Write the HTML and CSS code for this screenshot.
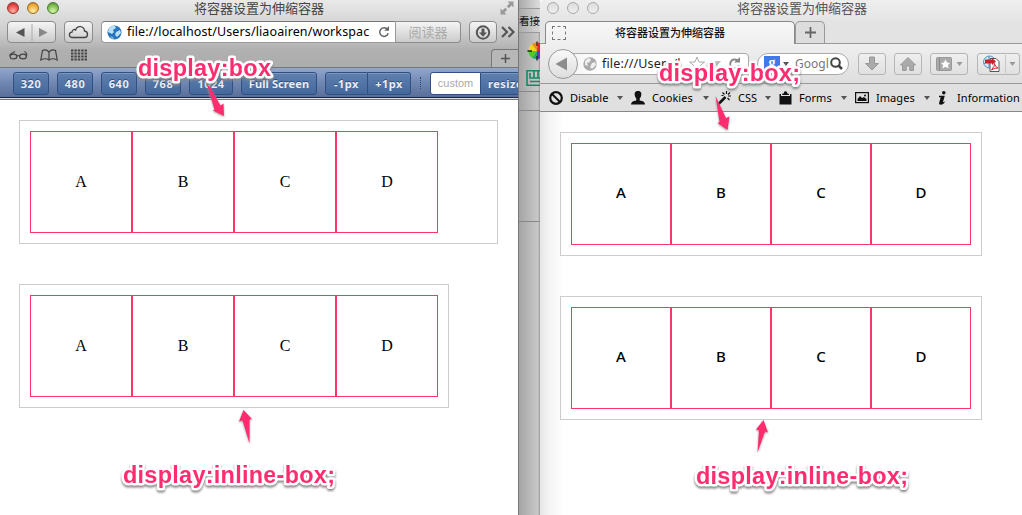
FILE: index.html
```html
<!DOCTYPE html>
<html lang="zh-CN">
<head>
<meta charset="utf-8">
<title>将容器设置为伸缩容器</title>
<link rel="stylesheet" href="styles.css">
</head>
<body>
<div class="desktop">
  <section class="safari">
    <header class="s-chrome">
      <div class="titlebar">
        <div class="lights"><i class="red"></i><i class="yellow"></i><i class="green"></i></div>
        <span class="title">将容器设置为伸缩容器</span>
        <svg class="expand" width="16" height="16" viewBox="0 0 16 16"><path d="M8.500 1.500H14.500V7.500L12.500 5.500L9.800 8.200L7.800 6.200L10.500 3.500ZM1.500 8.500L3.500 10.500L6.200 7.800L8.200 9.800L5.500 12.500L7.500 14.500H1.500Z" fill="#999"/></svg>
      </div>
      <div class="s-nav">
        <div class="s-btn pair"><svg width="47" height="20" viewBox="0 0 47 20"><path d="M8 10.500L16.500 6V15Z" fill="#555"/><path d="M39.500 10.500L31 6V15Z" fill="#888"/><path d="M24 2V19" stroke="#aaa"/></svg></div>
        <div class="s-btn cloud"><svg width="27" height="20" viewBox="0 0 27 20"><path d="M7.500 15.500C3.500 15.500 3.500 10.500 7 10.200C7 7.600 9.500 7 10.600 8C12 3.200 19 3.500 19.500 9C23.500 9.500 23.500 15.500 19.500 15.500Z" fill="none" stroke="#444" stroke-width="1.300"/></svg></div>
        <div class="s-url">
          <svg width="15" height="15" viewBox="0 0 15 15"><circle cx="7.500" cy="7.500" r="7" fill="#2674bd"/><path d="M2 3Q5 0 8 1L9 3L6 5L7 7L5 9L1 7ZM9 7L13 5L14 8L10 12L8 10Z" fill="#b9e0f5"/><path d="M3 11L6 12L7 14Q4 14 3 11Z" fill="#7dbce6"/></svg>
          <span>file://localhost/Users/liaoairen/workspac</span>
          <svg class="reload" width="12" height="12" viewBox="0 0 12 12"><path d="M9.500 3.500A4.300 4.300 0 1 0 10.200 7.200" fill="none" stroke="#666" stroke-width="1.500"/><path d="M6.300 4.700H11V0Z" fill="#666"/></svg>
        </div>
        <div class="reader">阅读器</div>
        <div class="s-btn down"><svg width="26" height="20" viewBox="0 0 26 20"><circle cx="13" cy="10.500" r="6.200" fill="none" stroke="#555" stroke-width="2"/><path d="M11.500 6.500H14.500V10.500H17L13 14.700L9 10.500H11.500Z" fill="#555"/></svg></div>
        <svg class="more" width="14" height="12" viewBox="0 0 14 12"><path d="M1 1L6 6L1 11M7.500 1L12.500 6L7.500 11" fill="none" stroke="#555" stroke-width="2.200"/></svg>
      </div>
      <div class="bookmarks">
        <div class="bm-icons">
          <svg width="19" height="12" viewBox="0 0 19 12"><g fill="none" stroke="#444" stroke-width="1.200"><ellipse cx="4.500" cy="7.500" rx="3.400" ry="2.400"/><ellipse cx="14" cy="7.500" rx="3.400" ry="2.400"/><path d="M8 7Q9.200 6 10.600 7M1 6.500Q.5 5.500 2.500 4.500L6 2.500M17.500 6.500Q18.500 4.500 15.500 2.500"/></g></svg>
          <svg width="18" height="12" viewBox="0 0 18 12"><path d="M9 3Q6 -.5 2.500 1.500L.8 11Q5.500 8.500 9 11Q12.500 8.500 17.200 11L15.500 1.500Q12 -.5 9 3ZM9 3V11" fill="none" stroke="#444" stroke-width="1.200"/></svg>
          <svg width="16" height="12" viewBox="0 0 16 12"><path d="M0 1.500H16M0 4.500H16M0 7.500H16M0 10.500H16" stroke="#444" stroke-width="2" stroke-dasharray="2.400 1"/></svg>
        </div>
        <div class="s-newtab"><svg width="9" height="9" viewBox="0 0 9 9"><path d="M0 4.500H9M4.500 0V9" stroke="#555" stroke-width="1.500"/></svg></div>
      </div>
    </header>
    <div class="resizer">
      <b>320</b><b>480</b><b>640</b><b>768</b><b class="w44">1024</b><b class="w76">Full Screen</b>
      <div class="px"><b>-1px</b><b>+1px</b></div>
      <i class="grip"></i>
      <div class="custom"><span>custom</span><b>resize</b></div>
    </div>
    <main class="s-page">
      <div class="box wide"><div>A</div><div>B</div><div>C</div><div>D</div></div>
      <div class="box inline"><div>A</div><div>B</div><div>C</div><div>D</div></div>
    </main>
  </section>

  <section class="behind">
    <div class="b-top"></div>
    <div class="b-text">看接</div>
    <div class="b-icons">
      <svg width="22" height="59" viewBox="0 0 22 59"><g transform="translate(18 18)"><path d="M0 0L-8.500 0A8.500 8.500 0 0 1 -5 -7Z" fill="#f0d51c"/><path d="M0 0L-5 -7A8.500 8.500 0 0 1 1 -8.500Z" fill="#f08a1e"/><path d="M0 0L1 -8.500L5 -7V0Z" fill="#e3242e"/><path d="M0 0L-8.500 0A8.500 8.500 0 0 0 -5 7Z" fill="#52cc1c"/><path d="M0 0L-5 7L0 8.500Z" fill="#13ad6d"/><path d="M0 0L0 8.500L5 7V0Z" fill="#6635c8"/><path d="M-9.500 0H-5M0 -9.500V-5M0 5V9.500" stroke="#222" stroke-width="1.300"/></g><g fill="none" stroke="#168966" stroke-width="1.600"><path d="M22 37.800H8V52.200H22M11 40V45H22M15 38V45M19 38V45M11 48.500H22"/></g></svg>
    </div>
    <div class="b-row1"></div><div class="b-row2"></div>
  </section>

  <section class="firefox">
    <header class="f-title">
      <div class="lights hollow"><i></i><i></i><i></i></div>
      <span class="title">将容器设置为伸缩容器</span>
    </header>
    <div class="tabs">
      <div class="tab"><i class="favicon"></i><span>将容器设置为伸缩容器</span></div>
      <div class="f-newtab"><svg width="11" height="11" viewBox="0 0 11 11"><path d="M0 5.500H11M5.500 0V11" stroke="#666" stroke-width="1.800"/></svg></div>
    </div>
    <div class="f-nav">
      <div class="back"><svg width="28" height="28" viewBox="0 0 28 28"><path d="M6.500 14L18 7.500V20.500Z" fill="#8c8c8c"/></svg></div>
      <div class="f-url">
        <svg width="14" height="14" viewBox="0 0 14 14"><circle cx="7" cy="7" r="6.700" fill="#aaa"/><path d="M2 4L5 1L8 2L7 5L4 6L5 9L2 8ZM9 6L12 5L13 8L9 12L7 10Z" fill="#eee"/></svg>
        <span>file:///Users/l</span>
        <svg class="f-url-icons" width="54" height="16" viewBox="0 0 54 16"><path d="M8 1L10 6L15.500 6L11.200 9.500L13 15L8 11.800L3 15L4.800 9.500L.5 6L6 6Z" fill="#fff" stroke="#aaa"/><path d="M24 5H32L28 10Z" fill="#bbb"/><path d="M48.500 4.500A4.500 4.500 0 1 0 50 9" fill="none" stroke="#888" stroke-width="2"/><path d="M45 6.500H51V1Z" fill="#888"/></svg>
      </div>
      <div class="search">
        <span class="g">g</span><i class="caret"></i><span class="ph">Googl</span>
        <svg width="13" height="13" viewBox="0 0 13 13"><circle cx="5.500" cy="5.500" r="4.300" fill="none" stroke="#444" stroke-width="2"/><path d="M8.500 8.500L12 12" stroke="#444" stroke-width="2.500"/></svg>
      </div>
      <div class="f-btn dl"><svg width="14" height="15" viewBox="0 0 14 15"><path d="M4.500 1H9.500V7.500H13.500L7 14L.5 7.500H4.500Z" fill="#aaa" stroke="#999"/></svg></div>
      <div class="f-btn home"><svg width="16" height="14" viewBox="0 0 16 14"><path d="M8 .5L15.500 8H13.500V13.500H9.800V9H6.200V13.500H2.500V8H.5Z" fill="#aaa" stroke="#999"/></svg></div>
      <div class="f-btn mark"><svg width="27" height="14" viewBox="0 0 27 14"><rect x=".5" y=".5" width="15" height="13" rx="1" fill="#aaa" stroke="#999"/><path d="M3.500 1V13" stroke="#888"/><path d="M9.500 2.500L11 5.500L14 6L12 8L12.500 11.500L9.500 9.800L6.500 11.500L7 8L5 6L8 5.500Z" fill="#fff"/><path d="M20.500 5H26.500L23.500 9Z" fill="#999"/></svg></div>
      <div class="f-btn pdf"><svg width="36" height="18" viewBox="0 0 36 18"><circle cx="6.500" cy="7" r="6" fill="#d7e8f5" stroke="#5a91c0"/><path d="M1 9Q6 3 12 5M6 1V13" fill="none" stroke="#5a91c0"/><path d="M7 3.500H13L16 6.500V16.500H7Z" fill="#fff" stroke="#555"/><path d="M2 4.500H9V3L13 6.500L9 10V8.500H2Z" fill="#c5242a"/><path d="M8.500 15Q12 11 11.500 8.500Q12 12 15 13Q12 12.500 8.500 15" fill="none" stroke="#d2242a"/><path d="M22.500 0V18" stroke="#c7c7c7"/><path d="M26.500 7H32.500L29.500 11Z" fill="#999"/></svg></div>
    </div>
    <div class="devbar">
      <span class="dv d1"><svg width="14" height="14" viewBox="0 0 14 14"><circle cx="7" cy="7" r="5.800" fill="none" stroke="#111" stroke-width="2.200"/><path d="M3 3L11 11" stroke="#111" stroke-width="2"/></svg><em>Disable</em><i class="caret"></i></span>
      <span class="dv d2"><svg width="14" height="14" viewBox="0 0 14 14"><path d="M7 0C10 0 10.500 2 10.300 4Q10 6.500 8.700 7.500V9.500Q14 10 14 13.500H0Q0 10 5.300 9.500V7.500Q4 6.500 3.700 4C3.500 2 4 0 7 0Z" fill="#111"/></svg><em>Cookies</em><i class="caret"></i></span>
      <span class="dv d3"><svg width="14" height="14" viewBox="0 0 14 14"><path d="M1.500 13L8.500 6" stroke="#111" stroke-width="2.500"/><path d="M9.500 0V3M5.500 1.500L7.500 3.500M13 1.500L11 3.500M11 5H14M10.500 7L12.500 9M4.500 4.500H6.500" stroke="#111" stroke-width="1.200"/></svg><em>CSS</em><i class="caret"></i></span>
      <span class="dv d4"><svg width="13" height="14" viewBox="0 0 13 14"><path d="M.5 3H2V5H11V3H12.500V13.500H.5ZM3 4L3.500 2.500H4.700Q4.700 .3 6.500 .3T8.300 2.500H9.500L10 4Z" fill="#111"/></svg><em>Forms</em><i class="caret"></i></span>
      <span class="dv d5"><svg width="14" height="12" viewBox="0 0 14 12"><rect x=".6" y=".6" width="12.800" height="10" fill="none" stroke="#111" stroke-width="1.200"/><path d="M2.500 9V7L5 4L7 6L9 5L11.500 7V9Z" fill="#111"/><circle cx="10" cy="3.500" r="1" fill="#111"/></svg><em>Images</em><i class="caret"></i></span>
      <span class="dv d6"><svg width="9" height="14" viewBox="0 0 9 14"><circle cx="5.800" cy="1.800" r="1.800" fill="#111"/><path d="M1 4.800H6.800L4.900 11.200L7.300 10.500Q5.500 13.700 3 13.700T1.200 11.500L2.700 6.200H1Z" fill="#111"/></svg><em>Information</em></span>
    </div>
    <main class="f-page">
      <div class="box"><div>A</div><div>B</div><div>C</div><div>D</div></div>
      <div class="box"><div>A</div><div>B</div><div>C</div><div>D</div></div>
    </main>
  </section>

  <svg class="notes" width="1022" height="515" viewBox="0 0 1022 515">
    <g class="labels">
      <text x="138" y="75.500" textLength="133">display:box</text>
      <text x="659" y="80.500" textLength="141">display:box;</text>
      <text x="123" y="482.500" textLength="212">display:inline-box;</text>
      <text x="696" y="483.500" textLength="212">display:inline-box;</text>
    </g>
    <g class="arrows">
      <path d="M207.500 86L214.500 109.500L213 110.500L224 116L223.500 103.500L220.500 105.500L209.500 86Z"/>
      <path d="M715.500 96L719.500 122L717.500 123L727.500 130L729.500 116.500L726 118Z"/>
      <path d="M243.500 410L239 421.500L242.500 420.500L249.500 443.500L249.500 419.500L252 419Z"/>
      <path d="M763.500 420L756 429.500L759 430.500L757.500 452.500L765 431.500L768 432.500Z"/>
    </g>
  </svg>
</div>
</body>
</html>
```
FILE: styles.css
```css
* { box-sizing: border-box; }
body { margin: 0; background: #fff; font-family: "Noto Sans", "Noto Sans CJK SC", sans-serif; }
svg { display: block; flex: none; }
.desktop { position: relative; display: grid; grid-template-columns: 518px 22px 482px; width: 1022px; height: 515px; overflow: hidden; }
.safari, .firefox, .behind { overflow: hidden; min-width: 0; }

.s-chrome { height: 68px; background: linear-gradient(#e9e9e9, #cfcfcf 30px, #b0b0b0 50px, #adadad 66px); border-bottom: 1px solid #777; }
.titlebar, .f-title { position: relative; display: flex; align-items: center; justify-content: center; height: 17px; }
.title { font: 13px/17px "Noto Sans CJK SC", sans-serif; color: #444; }
.titlebar .title { margin-top: -2px; }
.lights { position: absolute; left: 7px; top: 2px; display: flex; gap: 8px; }
.lights i { width: 12px; height: 12px; border-radius: 50%; border: 1px solid #777; }
.lights .red { background: radial-gradient(circle at 50% 80%, #ffb2a8, #e2443f 65%, #a62d2c); border-color: #963737; }
.lights .yellow { background: radial-gradient(circle at 50% 80%, #fff0a5, #eda836 65%, #a76c22); border-color: #986b2c; }
.lights .green { background: radial-gradient(circle at 50% 80%, #d9f7a8, #78b64b 65%, #47772c); border-color: #4f7c3c; }
.hollow i { background: linear-gradient(#ddd, #eee); border-color: #a9a9a9; }
.expand { position: absolute; left: 499px; top: 0; }

.s-nav { display: flex; align-items: center; height: 22px; margin-top: 4px; padding-left: 7px; }
.s-btn, .reader { height: 22px; border: 1px solid #8c8c8c; border-radius: 4px; background: linear-gradient(#f5f5f5, #cbcbcb); }
.pair { width: 49px; margin-right: 8px; }
.cloud { width: 29px; margin-right: 8px; }
.s-url { display: flex; align-items: center; width: 295px; height: 22px; padding-left: 5px; border: 1px solid #999; border-top-color: #777; border-radius: 4px 0 0 4px; background: #fff; }
.s-url span { width: 243px; margin-left: 5px; font-size: 12.500px; line-height: 20px; letter-spacing: .12px; white-space: nowrap; color: #000; }
.reload { margin-left: 8px; }
.reader { width: 65px; border-left: 0; border-radius: 0 4px 4px 0; text-align: center; font: 13px/19px "Noto Sans CJK SC", sans-serif; color: #aaa; margin-right: 8px; }
.down { width: 28px; margin-right: 4px; }
.bookmarks { display: flex; justify-content: space-between; height: 24px; }
.bm-icons { display: flex; align-items: center; gap: 12px; padding: 0 0 0 9px; }
.bm-icons svg:nth-child(3) { margin-left: 1px; }
.s-newtab { display: flex; align-items: center; justify-content: center; width: 27px; height: 19px; margin-top: 6px; border: 1px solid #777; border-right: 0; border-radius: 4px 0 0; background: #b7b7b7; }

.resizer { display: flex; align-items: center; gap: 8px; height: 32px; padding: 0 0 2px 13px; background: linear-gradient(#93a7cb, #7087b2 15px, #596f99 29px, #1b2640 29px, #1b2640 30px, #ddd 30px, #ddd 31px, #777 31px); }
.resizer b { flex: none; width: 36px; height: 23px; border: 1px solid #304f82; border-radius: 3px; background: linear-gradient(#5f80af, #45689c); box-shadow: inset 0 1px #7c98be; text-align: center; font: bold 11px/21px "Noto Sans", sans-serif; color: #e9edf4; text-shadow: 0 -1px #2c4b79; white-space: nowrap; letter-spacing: .5px; }
.resizer .w44 { width: 44px; }
.resizer .w76 { width: 76px; letter-spacing: .1px; }
.px { display: flex; }
.px b { width: 43px; border-radius: 3px 0 0 3px; }
.px b + b { border-left: 0; border-radius: 0 3px 3px 0; }
.grip { width: 1px; height: 12px; margin: 0 1px; border-left: 1px dotted #34476b; }
.custom { display: flex; flex: none; }
.custom span { width: 51px; height: 23px; border: 1px solid #304f82; border-radius: 3px 0 0 3px; background: #fff; color: #aaa; font: 11px/20px "Liberation Sans", sans-serif; text-align: center; }
.custom b { width: 50px; border-left: 0; border-radius: 0; }

.s-page { padding: 20px 19px; display: flex; flex-direction: column; align-items: flex-start; gap: 40px; font: 16px "Liberation Serif", serif; }
.box { display: flex; height: 124px; padding: 10px; border: 1px solid #ccc; }
.box.wide { width: 479px; }
.box.inline { width: 430px; }
.box div { width: 102px; height: 102px; border: 1px solid #f93667; text-align: center; line-height: 100px; }

.behind { display: flex; flex-direction: column; border-left: 1px solid #777; background: linear-gradient(90deg, #a5a5a5, #c8c8c8 19px, #999 21px); }
.b-top { height: 9px; border-bottom: 1px solid #999; background: linear-gradient(90deg, #aaa, #ddd); }
.b-text { height: 24px; border-bottom: 1px solid #999; font: 10.500px/23px "Noto Sans CJK SC", sans-serif; color: #111; white-space: nowrap; background: linear-gradient(90deg, #aaa, #d7d7d7); }
.b-icons { height: 59px; border-bottom: 1px solid #888; }
.b-row1 { height: 19px; border-bottom: 1px solid #888; }
.b-row2 { height: 111px; border-bottom: 1px solid #888; }

.firefox { background: #fff; border-radius: 4px 0 0; }
.f-title { height: 21px; padding-bottom: 6px; padding-left: 42px; background: linear-gradient(#efefef, #e4e4e4); }
.f-title .title { color: #555; }
.tabs { display: flex; align-items: flex-start; height: 23px; padding-left: 5px; background: #e3e3e3; border-bottom: 1px solid #999; }
.tab { display: flex; align-items: center; width: 250px; height: 23px; border: 1px solid #888; border-bottom: 0; border-radius: 5px 5px 0 0; background: linear-gradient(#f7f7f7, #efefef); font: 500 11px/20px "Noto Sans CJK SC", sans-serif; color: #111; }
.favicon { width: 14px; height: 14px; margin-left: 6px; border: 1px dashed #777; }
.tab span { margin-left: 49px; padding-bottom: 2px; }
.f-newtab { display: flex; align-items: center; justify-content: center; width: 30px; height: 22px; border: 1px solid #999; border-bottom: 0; border-radius: 5px 5px 0 0; background: #ddd; }
.f-nav { display: flex; align-items: center; height: 40px; padding-left: 8px; background: linear-gradient(#efefef, #dedede); border-bottom: 1px solid #999; }
.back { z-index: 1; width: 30px; height: 30px; border: 1px solid #999; border-radius: 50%; background: linear-gradient(#f9f9f9, #ddd); }
.f-url { display: flex; align-items: center; width: 179px; height: 22px; margin-left: -8px; margin-right: 8px; padding-left: 12px; border: 1px solid #aaa; border-radius: 0 4px 4px 0; background: linear-gradient(90deg, #f4f4f4, #fff 30px); font-size: 12.500px; letter-spacing: .15px; color: #222; }
.f-url span { width: 82px; margin-left: 5px; white-space: nowrap; }
.f-url-icons { margin-left: 5px; }
.search { display: flex; align-items: center; width: 92px; height: 22px; margin-right: 9px; padding-left: 6px; border: 1px solid #aaa; border-radius: 11px; background: #fff; }
.g { flex: none; width: 16px; height: 16px; background: #4278e8; color: #fff; text-align: center; font: bold 14px/13px "Liberation Serif", serif; }
.caret { flex: none; width: 0; height: 0; border: 3px solid transparent; border-top: 4px solid #555; border-bottom: 0; }
.search .caret { margin-left: 3px; }
.ph { width: 34px; margin: 0 1px 0 6px; color: #777; font-size: 12px; }
.f-btn { display: flex; align-items: center; justify-content: center; flex: none; height: 22px; border: 1px solid #b5b5b5; border-radius: 3px; background: linear-gradient(#efefef, #e0e0e0); margin-right: 8px; }
.dl { width: 28px; }
.home { width: 28px; }
.mark { width: 38px; margin-right: 9px; }
.pdf { width: 43px; margin-right: 0; justify-content: flex-start; padding-left: 5px; }
.devbar { display: flex; align-items: center; height: 28px; padding-left: 9px; background: #e0e0e0; border-bottom: 1px solid #888; font-size: 11px; color: #000; }
.dv { display: flex; align-items: center; flex: none; }
.dv em { font-style: normal; margin-left: 7px; white-space: nowrap; letter-spacing: .05px; }
.dv .caret { margin-left: auto; margin-right: 8px; }
.d1 { width: 82px; }
.d2 { width: 86px; }
.d3 { width: 62px; }
.d4 { width: 76px; }
.d5 { width: 83px; }
.d6 em { margin-left: 10px; }
.f-page { display: flex; flex-direction: column; align-items: flex-start; gap: 40px; height: 403px; padding: 20px; font: 500 15px "Noto Sans", sans-serif; color: #000; background: linear-gradient(90deg, #e5e5e5, #f5f5f5 10px, #fff 24px); }
.f-page .box { width: 422px; }
.f-page .box div { width: 100px; line-height: 97px; }

.notes { position: absolute; left: 0; top: 0; }
.arrows { fill: #ff2d6f; filter: drop-shadow(0 1px 1px #999); }
.labels { font: bold 23.500px "Liberation Sans", sans-serif; fill: #ff2d6f; stroke: #fff; stroke-width: 5px; stroke-linejoin: round; paint-order: stroke; filter: drop-shadow(0 2px 1px #888); }
```
